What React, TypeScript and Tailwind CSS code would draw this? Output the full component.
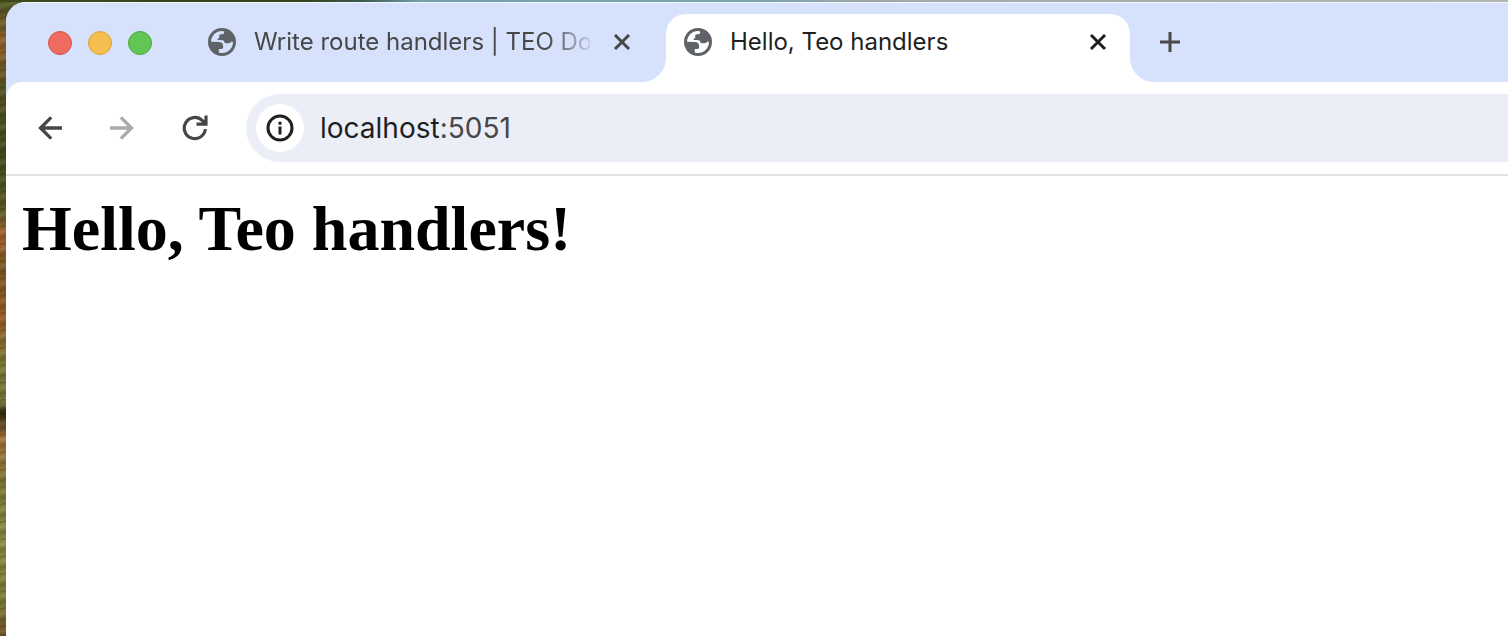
import React from "react";

function GlobeIcon() {
  return (
    <svg viewBox="0 0 28 28" className="size-7 shrink-0" aria-hidden="true">
      <circle cx="14" cy="14" r="14" fill="#5f6368" />
      <path
        className="fill-current"
        d="M3 13.7C3.2 7.8 8 3.1 14 3.1Q15.2 3.1 16.2 3.4V4.6Q16.2 6.2 14.4 6.2H12.6Q11.2 6.2 11.2 7.8V9.4Q11.2 10.6 9.6 10.6V12H13Q16.2 12 16.4 14.4Q18 15.6 20.4 15.2Q22.6 14.8 23.4 13.4L25 14C25 20.2 20 25 14 25Q12 25 10.8 24.4V21H12.6Q15.2 21 15.2 18.4Q15.2 14 10.6 14Z"
      />
    </svg>
  );
}

function CloseIcon() {
  return (
    <svg viewBox="0 0 24 24" className="size-6" fill="none" stroke="currentColor" strokeWidth="3" aria-hidden="true">
      <path d="M5 5 19 19M19 5 5 19" />
    </svg>
  );
}

export default function App() {
  return (
    <div className="min-h-screen bg-[repeating-linear-gradient(168deg,#00000038_0px,#00000000_3px,#ffffff14_6px,#00000030_11px,#00000000_17px),linear-gradient(180deg,#4c5a24_0%,#94602c_7%,#565420_14%,#444c1e_25%,#5c5c24_33%,#a86430_37%,#7c5a24_42%,#9c5c28_50%,#7c7c38_57%,#78783a_63%,#33280f_65%,#a8743c_69%,#807838_76%,#8e8c44_85%,#7e7c38_95%,#704e28_100%)] font-['Inter','Liberation_Sans',sans-serif]">
      <div className="h-0.5 bg-[linear-gradient(90deg,#3c4a1c_0%,#304418_20%,#3a5a50_24%,#74a0b0_28%,#7ca4b0_50%,#a4a8a8_60%,#b4b4b4_100%)]" />
      <div className="ml-1.5 overflow-hidden rounded-tl-[20px] bg-[#d6e1fc]">
        <header className="flex h-20 bg-[linear-gradient(90deg,#d6e1fc_50px,#ffffff_50px)]">
          <div className="flex w-[660px] shrink-0 items-center rounded-br-3xl border-t border-[#f4f7fe] bg-[#d6e1fc]">
            <div className="ml-[42px] flex gap-4">
              <button aria-label="Close window" className="size-6 rounded-full border border-[#d9534c] bg-[#ed6b5f]" />
              <button aria-label="Minimize window" className="size-6 rounded-full border border-[#dba543] bg-[#f5bf4f]" />
              <button aria-label="Zoom window" className="size-6 rounded-full border border-[#4fa73c] bg-[#61c654]" />
            </div>
            <div className="ml-14 flex items-center pb-0.5">
              <span className="flex text-[#d6e1fc]"><GlobeIcon /></span>
              <span className="ml-[18px] w-[336px] overflow-hidden text-2xl whitespace-nowrap text-[#474747] [mask-image:linear-gradient(90deg,#000_87%,transparent_102%)]">
                Write route handlers | TEO Do
              </span>
              <button aria-label="Close Write route handlers tab" className="ml-5 text-[#474747]"><CloseIcon /></button>
            </div>
          </div>
          <div className="flex w-[464px] shrink-0 flex-col border-t border-[#f4f7fe] bg-[#d6e1fc] pt-[11px]">
            <div className="flex flex-1 items-center rounded-t-[20px] bg-white px-[18px] pb-3">
              <span className="flex text-white"><GlobeIcon /></span>
              <span className="ml-[18px] flex-1 text-2xl whitespace-nowrap text-[#1f1f1f]">Hello, Teo handlers</span>
              <button aria-label="Close Hello, Teo handlers tab" className="mr-0.5 text-[#1f1f1f]"><CloseIcon /></button>
            </div>
          </div>
          <div className="flex min-w-0 flex-1 items-center rounded-bl-3xl border-t border-[#f4f7fe] bg-[#d6e1fc] pb-0.5 pl-[30px]">
            <button aria-label="New tab" className="text-[#474747]">
              <svg viewBox="0 0 20 20" className="size-5" fill="none" stroke="currentColor" strokeWidth="3">
                <path d="M10 0V20M0 10H20" />
              </svg>
            </button>
          </div>
        </header>
        <div className="flex h-[94px] items-center rounded-tl-2xl border-b-2 border-[#e1e1e1] bg-white">
          <nav aria-label="Navigation" className="ml-8 flex w-52 shrink-0 items-center text-[#474747]">
            <button aria-label="Back">
              <svg viewBox="0 0 24 24" className="size-6" fill="none" stroke="currentColor" strokeWidth="3.3">
                <path d="M24.3 12H3M13.2 1.3 2.5 12 13.2 22.7" />
              </svg>
            </button>
            <button aria-label="Forward" className="ml-12 text-[#ababab]">
              <svg viewBox="0 0 24 24" className="size-6" fill="none" stroke="currentColor" strokeWidth="3.3">
                <path d="M0 12H21M10.8 1.3 21.5 12 10.8 22.7" />
              </svg>
            </button>
            <button aria-label="Reload" className="ml-12">
              <svg viewBox="0 0 26 26" className="size-[26px]" fill="none" stroke="currentColor" strokeWidth="3.2">
                <path d="M23.4 14.2A10.6 10.6 0 1 1 20.2 5.4L23 8.4M14.5 9.2H24V0.6" />
                <path d="M19 9.2 23.6 9.2 23.6 4.6Z" fill="currentColor" stroke="none" />
              </svg>
            </button>
          </nav>
          <div className="flex h-[68px] min-w-0 flex-1 items-center rounded-l-full bg-[#ebeef7] pl-2.5">
            <button aria-label="Site information" className="flex size-12 items-center justify-center rounded-full bg-white text-[#1f1f1f]">
              <svg viewBox="0 0 28 28" className="size-7" fill="none" stroke="currentColor" strokeWidth="3">
                <circle cx="14" cy="14" r="12" />
                <path d="M14 12.5V20.5M14 7.8V10.8" />
              </svg>
            </button>
            <a href="http://localhost:5051" className="ml-4 text-[28px] leading-9 text-[#1f1f1f]">
              localhost<span className="text-[#474747]">:5051</span>
            </a>
          </div>
        </div>
        <main className="min-h-[460px] bg-white px-4 pt-4">
          <h1 className="font-['Liberation_Serif',serif] text-[64px] leading-[74px] font-bold text-black">Hello, Teo handlers!</h1>
        </main>
      </div>
    </div>
  );
}
